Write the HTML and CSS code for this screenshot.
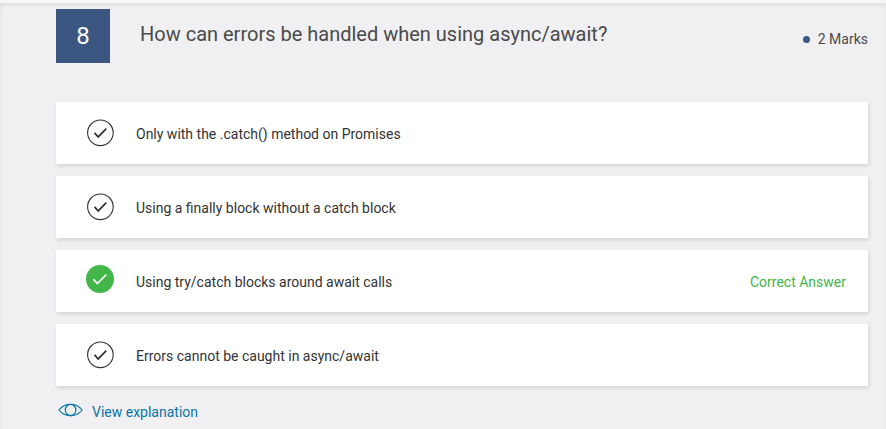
FILE: index.html
```html
<!DOCTYPE html>
<html lang="en">
<head>
<meta charset="utf-8">
<title>Question 8</title>
<link rel="stylesheet" href="styles.css">
</head>
<body>
<main class="panel">
  <header class="question">
    <div class="number">8</div>
    <h1 class="title">How can errors be handled when using async/await?</h1>
    <div class="marks"><span class="dot"></span>2 Marks</div>
  </header>
  <ul class="options">
    <li class="option">
      <svg class="icon" viewBox="0 0 28 28"><circle cx="14.4" cy="13.8" r="12.8"/><path d="M8.500 13.900l3.700 4 8.100-8.300"/></svg>
      <span class="text">Only with the .catch() method on Promises</span>
    </li>
    <li class="option">
      <svg class="icon" viewBox="0 0 28 28"><circle cx="14.4" cy="13.8" r="12.8"/><path d="M8.500 13.900l3.700 4 8.100-8.300"/></svg>
      <span class="text">Using a finally block without a catch block</span>
    </li>
    <li class="option correct">
      <svg class="icon" viewBox="0 0 28 28"><circle cx="14" cy="14" r="14"/><path d="M7.400 14.300l4 4.300 9-9.100"/></svg>
      <span class="text">Using try/catch blocks around await calls</span>
      <span class="verdict">Correct Answer</span>
    </li>
    <li class="option">
      <svg class="icon" viewBox="0 0 28 28"><circle cx="14.4" cy="13.8" r="12.8"/><path d="M8.500 13.900l3.700 4 8.100-8.300"/></svg>
      <span class="text">Errors cannot be caught in async/await</span>
    </li>
  </ul>
  <a class="explain"><svg class="eye" viewBox="0 0 26 14"><path d="M2 7C5 3 9 1.300 13.600 1.300S22 3 25.200 7C22 11 18 12.700 13.600 12.700S5 11 2 7Z"/><ellipse cx="13.600" cy="7" rx="5.300" ry="5.700"/></svg>View explanation</a>
</main>
</body>
</html>
```
FILE: styles.css
```css
* { box-sizing: border-box; }
body {
  margin: 0;
  height: 429px;
  padding-top: 3px;
  overflow: hidden;
  background: #f9f7f9;
  font-family: Roboto, sans-serif;
  font-size: 14px;
  color: #333;
}
.panel {
  height: 426px;
  padding: 6px 18px 0 56px;
  background: #f0f0f2;
  box-shadow: inset 0 4px 5px -2px rgba(0, 0, 0, .07), inset 3px 0 4px -2px rgba(0, 0, 0, .04);
}
.question { display: flex; height: 93px; }
.number {
  width: 54px;
  height: 54px;
  background: #3b5680;
  color: #fff;
  font-size: 24px;
  line-height: 54px;
  text-align: center;
}
.title {
  flex: 1;
  margin: 0 0 0 30px;
  font-size: 20px;
  font-weight: 400;
  line-height: 50px;
  color: #4a4a4a;
}
.marks {
  display: flex;
  align-items: center;
  height: 60px;
  color: #4a4a4a;
}
.dot {
  width: 7px;
  height: 7px;
  margin-right: 8px;
  border-radius: 50%;
  background: #3b5680;
}
.options { margin: 0; padding: 0; list-style: none; }
.option {
  display: flex;
  align-items: center;
  height: 62px;
  margin-bottom: 12px;
  padding: 2px 22px 0 30px;
  background: #fff;
  box-shadow: 1px 2px 4px rgba(0, 0, 0, .12);
}
.icon {
  width: 28px;
  height: 28px;
  margin: -2px 22px 0 0;
  fill: none;
  stroke: #333;
  stroke-width: 1.1;
}
.icon path { stroke-width: 1.7; }
.correct .icon { margin-top: -6px; }
.correct circle { fill: #43b649; stroke: none; }
.correct path { stroke: #fff; }
.text { flex: 1; }
.verdict { color: #43b649; }
.explain {
  display: flex;
  align-items: center;
  height: 28px;
  padding-left: 1px;
  color: #0b75a3;
}
.eye {
  width: 26px;
  height: 14px;
  margin: -4px 9px 0 0;
  fill: none;
  stroke: #0b75a3;
  stroke-width: 1.2;
}
```
